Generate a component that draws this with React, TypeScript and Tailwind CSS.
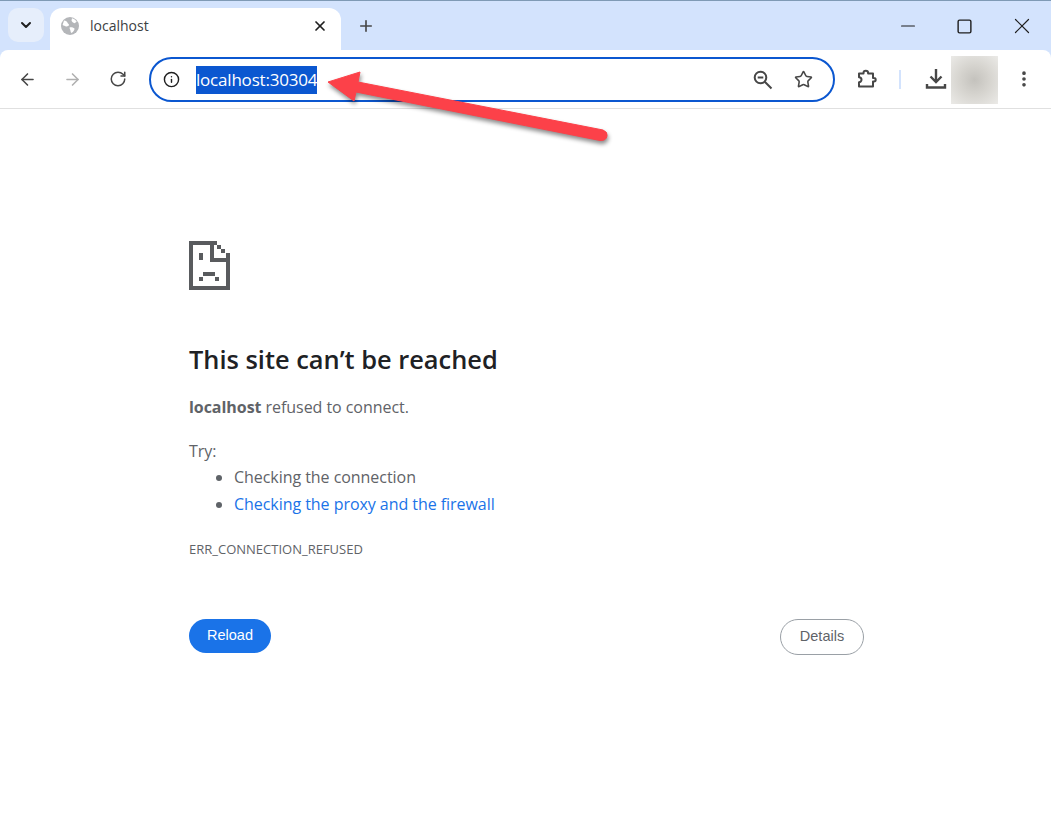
import React from 'react';
import { ArrowLeft, ArrowRight, ChevronDown, EllipsisVertical, Info, Minus, Plus, RotateCw, Square, Star, X } from 'lucide-react';

const uiFont = 'font-["Open_Sans","Noto_Sans",sans-serif]';

function SadFile() {
  return (
    <svg width="41" height="49" viewBox="0 0 41 49" fill="#595b5e" className="block">
      <path d="M0 0h28v4H25v13h12v-5h4v37H0zM4 4v41h33V21H21V4z" fillRule="evenodd" />
      <rect x="28" y="4" width="4" height="4" />
      <rect x="32" y="8" width="4" height="4" />
      <rect x="10" y="12" width="4" height="7" />
      <rect x="14" y="31" width="12" height="4" />
      <rect x="10" y="36" width="4" height="4" />
      <rect x="26" y="36" width="4" height="4" />
    </svg>
  );
}

function Globe() {
  return (
    <svg width="18" height="18" viewBox="0 0 18 18">
      <circle cx="9" cy="9" r="9" fill="#b4b6b9" />
      <path d="M3 3.5c2 .3 3 .8 3.4 2 .3 1 1.6 1.2 1.6 2.5 0 1-1.4 1-2.4 1.4-1 .4-2.8-1-4-1.4zM11 1.2c2 .6 3.6 1.8 4.7 3.6l-2.2 1.4c-1.4-.4-2.5-1.2-3-2.6zM8.6 10.500c1.800-.4 3.600.2 4.900 1 .2 1.300-1 3.300-3 4.600-.8-.6-1-2-1.200-3-.2-1-.9-1.500-.7-2.600z" fill="#fff" />
    </svg>
  );
}

function ZoomIcon() {
  return (
    <svg width="20" height="20" viewBox="0 0 20 20" fill="none" stroke="#474747" strokeWidth="2" className="ml-auto">
      <circle cx="7.5" cy="7.5" r="5.800" />
      <path d="M4.700 7.500h5.600M11.800 11.800l6.700 6.700" />
    </svg>
  );
}

function PuzzleIcon() {
  return (
    <svg width="20" height="20" viewBox="0 0 20 20" fill="none" stroke="#474747" strokeWidth="2" strokeLinejoin="round" className="ml-[22px]">
      <path d="M2 4.500h4.500V4a2.300 2.300 0 0 1 4.600 0v.5H16V9h1a1.600 1.600 0 0 1 0 3.400h-1v5.100H2v-4.300a2.500 2.500 0 0 0 0-5z" />
    </svg>
  );
}

function DownloadIcon() {
  return (
    <svg width="22" height="22" viewBox="0 0 22 22" fill="none" stroke="#474747" strokeWidth="2.400" className="ml-6">
      <path d="M11 1v12.500M5.500 8.500l5.500 5.500 5.500-5.500M2 16v3.500h18V16" />
    </svg>
  );
}

function RedArrow() {
  return (
    <svg width="300" height="90" viewBox="320 60 300 90" className="absolute left-[320px] top-[60px] drop-shadow-[1px_3px_2px_rgba(0,0,0,0.45)]">
      <path d="M328 82L360 72L358 82L603 130Q608 132 607 136Q606 141 600 140.500L356 92L354 101Z" fill="#fc4149" stroke="#fc4149" strokeWidth="1" strokeLinejoin="round" />
    </svg>
  );
}

function TabStrip() {
  return (
    <div className="flex h-[50px] items-start border-t border-[#7f9ab5] bg-[#d3e3fd] pl-2">
      <button className="mt-[7px] flex h-[34px] w-9 items-center justify-center rounded-[10px] bg-[#e6eefb] text-[#1f1f1f]">
        <ChevronDown size={16} strokeWidth={3} />
      </button>
      <div className="relative ml-1.5 mt-[7px] flex h-[42px] w-[291px] items-center rounded-t-xl bg-white pl-[11px] pr-[13px] pb-1.5">
        <Globe />
        <span className="ml-[11px] flex-1 text-sm text-[#3c4043]">localhost</span>
        <X size={16} strokeWidth={2.6} className="text-[#1f1f1f]" />
      </div>
      <Plus size={18} strokeWidth={2.2} className="ml-4 mt-4 text-[#474747]" />
      <div className="ml-auto mt-3 flex items-center text-[#1f1f1f]">
        <Minus size={22} strokeWidth={1.3} className="mr-[37px]" />
        <Square size={17} strokeWidth={2} className="mr-9" />
        <X size={26} strokeWidth={1.1} className="mr-4" />
      </div>
    </div>
  );
}

function Toolbar() {
  return (
    <div className="flex h-[59px] items-center rounded-t-lg border-b border-[#e0e0e0] bg-white pl-[18px]">
      <ArrowLeft size={19} strokeWidth={2} className="text-[#474747]" />
      <ArrowRight size={19} strokeWidth={2} className="ml-[26px] text-[#b0b0b0]" />
      <RotateCw size={18} strokeWidth={2} className="ml-[27px] text-[#474747]" />
      <div className="ml-[22px] mt-px flex h-[45px] w-[686px] items-center rounded-full border-[2.5px] border-[#0b57d0] pl-3 pr-5">
        <Info size={17} strokeWidth={2} className="text-[#1f1f1f]" />
        <span className="ml-4 flex h-7 items-center bg-[#0b57d0] text-[17px] tracking-[-0.2px] text-white">localhost:30304</span>
        <ZoomIcon />
        <Star size={19} strokeWidth={2} className="ml-[21px] text-[#474747]" />
      </div>
      <PuzzleIcon />
      <div className="ml-[22px] h-[19px] w-[2px] bg-[#d3e3fd]" />
      <DownloadIcon />
      <div className="ml-1 mt-[2px] h-12 w-[47px] bg-[radial-gradient(circle,#c4c2bd_0%,#d6d4cf_45%,#ebeae7_100%)]" />
      <EllipsisVertical size={20} strokeWidth={2.4} className="ml-4 text-[#474747]" />
    </div>
  );
}

function ErrorPage() {
  return (
    <main className={`flex-1 bg-white pl-[189px] pt-[132px] text-[#5f6368] ${uiFont}`}>
      <div className="w-[675px]">
        <SadFile />
        <h1 className="mt-[51px] text-[25.400px] font-semibold leading-[36px] text-[#202124]">This site can’t be reached</h1>
        <p className="mt-5 text-base leading-[20px] tracking-[-0.05px]"><b className="font-bold">localhost</b> refused to connect.</p>
        <p className="mt-6 text-base leading-[20px] tracking-[-0.05px]">Try:</p>
        <ul className="mt-[3px] list-disc pl-[45px] text-base leading-[27px] tracking-[-0.05px]">
          <li>Checking the connection</li>
          <li className="marker:text-[#5f6368]"><span className="text-[#1a73e8]">Checking the proxy and the firewall</span></li>
        </ul>
        <div className="mt-[22px] text-[13px] leading-[18px]">ERR_CONNECTION_REFUSED</div>
        <div className="mt-[61px] flex items-start justify-between font-['Liberation_Sans',sans-serif] text-[14.500px]">
          <button className="h-[34px] w-[82px] rounded-full bg-[#1a73e8] text-white">Reload</button>
          <button className="h-9 w-[84px] rounded-full border border-[#9aa0a6] bg-white text-[#5f6368]">Details</button>
        </div>
      </div>
    </main>
  );
}

export default function App() {
  return (
    <div className={`relative flex h-[825px] w-[1051px] flex-col overflow-hidden bg-[#d3e3fd] ${uiFont}`}>
      <TabStrip />
      <Toolbar />
      <ErrorPage />
      <RedArrow />
    </div>
  );
}
